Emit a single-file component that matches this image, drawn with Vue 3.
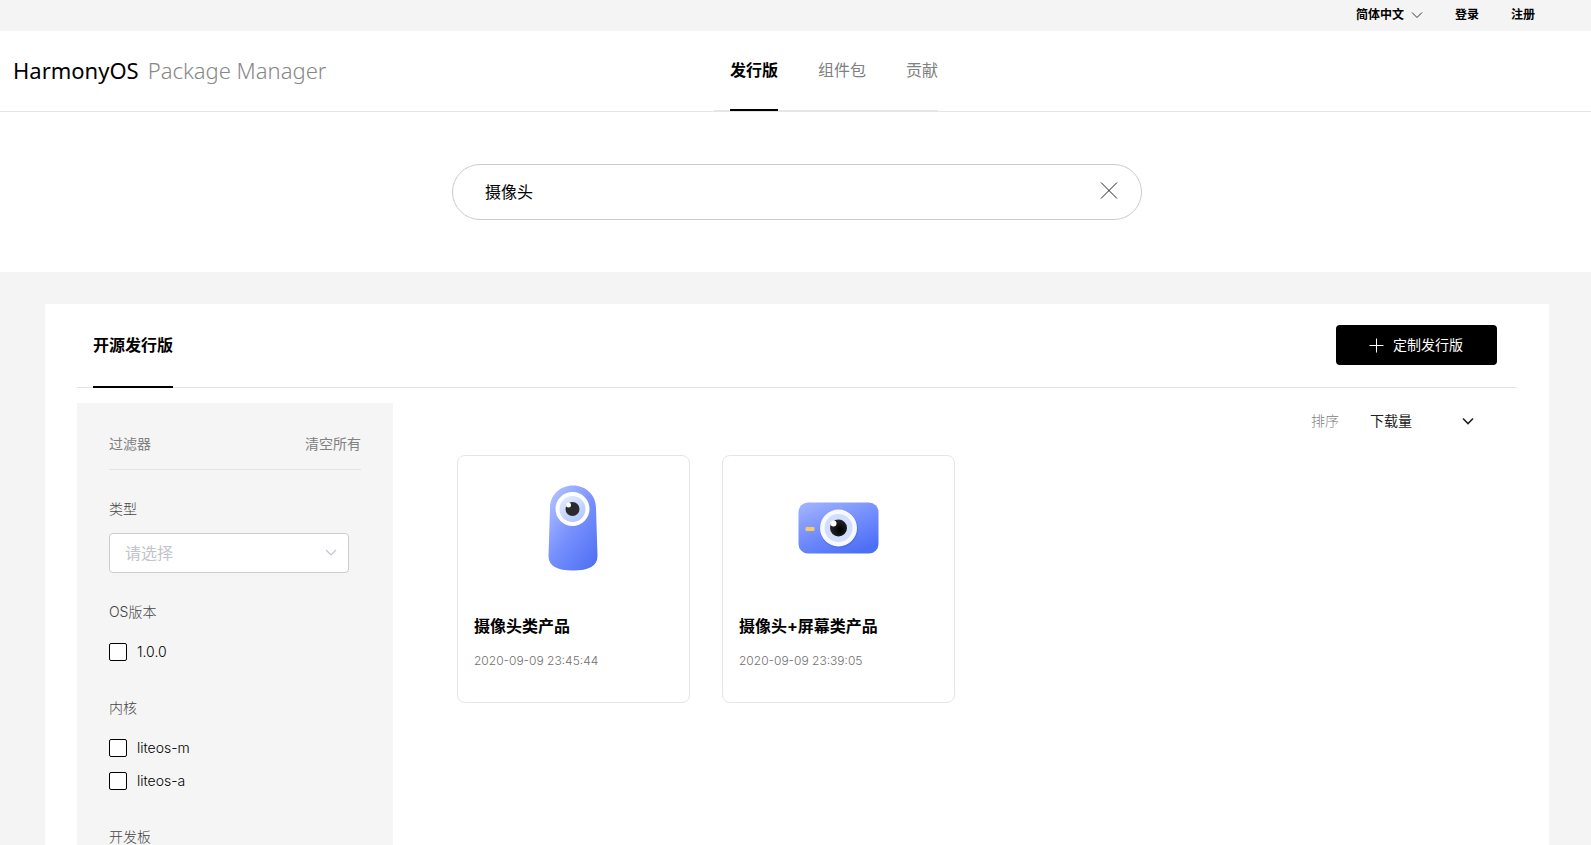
<script setup>
import { ref } from 'vue'

const keyword = ref('摄像头')
const type = ref('')
const sort = ref('downloads')
const checked = ref([])

const navItems = [
  { label: '发行版', active: true },
  { label: '组件包', active: false },
  { label: '贡献', active: false },
]

const groups = [
  { title: 'OS版本', options: ['1.0.0'] },
  { title: '内核', options: ['liteos-m', 'liteos-a'] },
  { title: '开发板', options: [] },
]

const products = [
  { icon: 'camera', name: '摄像头类产品', time: '2020-09-09 23:45:44' },
  { icon: 'screen', name: '摄像头+屏幕类产品', time: '2020-09-09 23:39:05' },
]

function clearFilters() {
  type.value = ''
  checked.value = []
}
</script>

<template>
  <div class="page">
    <div class="topbar">
      <button type="button" class="lang">
        简体中文
        <svg width="12" height="8" viewBox="0 0 12 8" aria-hidden="true">
          <path d="M1 1.5 6 6.5 11 1.5" fill="none" stroke="#333" stroke-width="1" />
        </svg>
      </button>
      <a href="#">登录</a>
      <a href="#">注册</a>
    </div>

    <header class="header">
      <a href="#" class="logo"><span class="brand">HarmonyOS</span><span class="product">Package Manager</span></a>
      <nav class="nav">
        <a v-for="n in navItems" :key="n.label" href="#" :class="{ active: n.active }">{{ n.label }}</a>
      </nav>
    </header>

    <section class="search">
      <form class="search-box" @submit.prevent>
        <input v-model="keyword" type="text" aria-label="搜索" />
        <button type="button" aria-label="清除" @click="keyword = ''">
          <svg width="18" height="18" viewBox="0 0 18 18" aria-hidden="true">
            <path d="M1 0.5 17 16.500M17 0.5 1 16.500" fill="none" stroke="#222" stroke-width="1" />
          </svg>
        </button>
      </form>
    </section>

    <main class="content">
      <div class="panel">
        <div class="tabs">
          <a href="#" class="tab">开源发行版</a>
          <button type="button" class="create">
            <svg width="15" height="15" viewBox="0 0 15 15" aria-hidden="true">
              <path d="M7.5 0.5V14.5M0.5 7.5H14.5" fill="none" stroke="#fff" stroke-width="1" />
            </svg>
            定制发行版
          </button>
        </div>

        <div class="body">
          <aside class="filter">
            <div class="filter-head">
              <span>过滤器</span>
              <button type="button" @click="clearFilters">清空所有</button>
            </div>
            <label class="group-title" for="type">类型</label>
            <div class="select">
              <select id="type" v-model="type">
                <option value="">请选择</option>
              </select>
              <svg width="12" height="8" viewBox="0 0 12 8" aria-hidden="true">
                <path d="M1 1 6 6 11 1" fill="none" stroke="#c0c4cc" stroke-width="1.2" />
              </svg>
            </div>
            <div v-for="g in groups" :key="g.title" class="group" role="group" :aria-label="g.title">
              <div class="group-title">{{ g.title }}</div>
              <label v-for="o in g.options" :key="o" class="option">
                <input v-model="checked" type="checkbox" :value="o" />
                <span>{{ o }}</span>
              </label>
            </div>
          </aside>

          <div class="results">
            <div class="sort">
              <label for="sort">排序</label>
              <div class="sort-select">
                <select id="sort" v-model="sort">
                  <option value="downloads">下载量</option>
                </select>
                <svg width="12" height="8" viewBox="0 0 12 8" aria-hidden="true">
                  <path d="M1 1.5 6 6.5 11 1.5" fill="none" stroke="#222" stroke-width="1.6" />
                </svg>
              </div>
            </div>

            <div class="cards">
              <article v-for="p in products" :key="p.name" class="card">
                <svg v-if="p.icon === 'camera'" class="art" viewBox="0 0 100 100" aria-hidden="true">
                  <defs>
                    <linearGradient id="camBody" x1="0.1" y1="0" x2="0.9" y2="1">
                      <stop offset="0" stop-color="#b4c4ff" />
                      <stop offset="0.5" stop-color="#7790fd" />
                      <stop offset="1" stop-color="#4f70f3" />
                    </linearGradient>
                    <linearGradient id="camIris" x1="0.2" y1="0" x2="0.8" y2="1">
                      <stop offset="0" stop-color="#e2eaff" />
                      <stop offset="1" stop-color="#b0c5ff" />
                    </linearGradient>
                  </defs>
                  <path d="M26 30C26 17 36 7.500 49 7.500S72 17 72 30L73.500 78C73.500 88 65 92.500 49 92.500S24.500 88 24.500 78Z" fill="url(#camBody)" />
                  <circle cx="48.500" cy="31" r="17" fill="#fff" />
                  <circle cx="48.500" cy="31" r="13" fill="url(#camIris)" />
                  <circle cx="48.500" cy="31" r="7" fill="#292a2d" />
                  <circle cx="44.500" cy="27" r="2.500" fill="#fff" />
                </svg>
                <svg v-else class="art" viewBox="0 0 100 100" aria-hidden="true">
                  <defs>
                    <linearGradient id="scrBody" x1="0.1" y1="0" x2="0.7" y2="1">
                      <stop offset="0" stop-color="#a0b2ff" />
                      <stop offset="0.5" stop-color="#748efd" />
                      <stop offset="1" stop-color="#4d6ff5" />
                    </linearGradient>
                    <radialGradient id="scrPupil" cx="0.6" cy="0.6" r="0.6">
                      <stop offset="0" stop-color="#000" />
                      <stop offset="1" stop-color="#25282c" />
                    </radialGradient>
                  </defs>
                  <rect x="9.500" y="24.500" width="80" height="51" rx="9.500" fill="url(#scrBody)" />
                  <rect x="16.500" y="49" width="9" height="4" rx="1" fill="#f9ca56" />
                  <circle cx="50" cy="51" r="19" fill="#3559d8" opacity="0.35" />
                  <circle cx="49.500" cy="50" r="18.500" fill="#f8f9fd" />
                  <circle cx="49.500" cy="50" r="14" fill="#d3ddfd" />
                  <circle cx="49.500" cy="50" r="8.500" fill="url(#scrPupil)" />
                  <circle cx="44.500" cy="45.500" r="3" fill="#fff" />
                </svg>
                <h3>{{ p.name }}</h3>
                <time>{{ p.time }}</time>
              </article>
            </div>
          </div>
        </div>
      </div>
    </main>
  </div>
</template>

<style>
html {
  scrollbar-width: none;
}
body {
  margin: 0;
}
</style>

<style scoped>
.page {
  display: flex;
  flex-direction: column;
  min-height: 100vh;
  background: #fff;
  color: #000;
  font-family: Inter, "Noto Sans CJK SC", sans-serif;
  font-size: 14px;
  line-height: 20px;
}
.page *,
.page *::before {
  box-sizing: border-box;
}
a {
  color: inherit;
  text-decoration: none;
}
button,
input,
select {
  margin: 0;
  padding: 0;
  border: 0;
  background: none;
  color: inherit;
  font: inherit;
  outline: none;
}
button,
select {
  cursor: pointer;
}
select {
  appearance: none;
}

.topbar {
  display: flex;
  justify-content: flex-end;
  align-items: center;
  gap: 32px;
  height: 31px;
  padding: 0 56px 2px 0;
  background: #f4f4f4;
  font-size: 12px;
  font-weight: 600;
}
.lang {
  display: flex;
  align-items: center;
  gap: 7px;
}

.header {
  display: grid;
  grid-template-columns: 714px 1fr;
  height: 81px;
  border-bottom: 1px solid #e5e5e5;
}
.logo {
  display: flex;
  align-items: center;
  gap: 9px;
  height: 80px;
  padding: 0 0 2px 13px;
  font-family: "Noto Sans", sans-serif;
  font-size: 22px;
}
.product {
  color: #888;
  font-weight: 300;
}
.nav {
  display: flex;
  justify-self: start;
  gap: 40px;
  height: 80px;
  padding-left: 16px;
  border-bottom: 1px solid #e4e7ed;
  color: #808080;
  font-size: 16px;
  line-height: 78px;
}
.nav a {
  height: 80px;
}
.nav .active {
  border-bottom: 2px solid #000;
  color: #000;
  font-weight: 700;
}

.search {
  padding: 52px 0 52px 3px;
}
.search-box {
  display: flex;
  align-items: center;
  max-width: 690px;
  height: 56px;
  margin: 0 auto;
  padding: 0 23px 2px 32px;
  border: 1px solid #ccc;
  border-radius: 28px;
}
.search-box input {
  flex: 1;
  min-width: 0;
  height: 24px;
  font-size: 16px;
}
.search-box button {
  display: flex;
}

.content {
  display: flex;
  flex: 1;
  padding: 32px 42px 0 45px;
  background: #f4f4f4;
}
.panel {
  display: flex;
  flex: 1;
  flex-direction: column;
  padding: 0 32px;
  background: #fff;
}
.tabs {
  display: flex;
  justify-content: space-between;
  align-items: flex-start;
  height: 84px;
  padding: 0 20px 0 16px;
  border-bottom: 1px solid #e4e4e4;
}
.tab {
  height: 84px;
  border-bottom: 2px solid #000;
  font-size: 16px;
  font-weight: 700;
  line-height: 82px;
}
.create {
  display: flex;
  align-items: center;
  gap: 9px;
  height: 40px;
  margin-top: 21px;
  padding: 0 34px 0 33px;
  border-radius: 4px;
  background: #000;
  color: #fff;
}
.body {
  display: flex;
  flex: 1;
  padding-top: 15px;
}

.filter {
  width: 316px;
  padding: 31px 32px 0;
  background: #f5f5f5;
}
.filter-head {
  display: flex;
  justify-content: space-between;
  height: 36px;
  margin-bottom: 29px;
  border-bottom: 1px solid #e4e4e4;
  color: #808080;
}
.filter-head button {
  height: 20px;
}
.group-title {
  display: block;
  color: #444;
  font-weight: 300;
}
.select {
  position: relative;
  width: 240px;
  margin: 14px 0 29px;
}
.select select {
  display: block;
  width: 100%;
  height: 40px;
  padding: 0 40px 0 15px;
  border: 1px solid #ccc;
  border-radius: 4px;
  background: #fff;
  color: #c0c4cc;
  font-size: 16px;
}
.select svg {
  position: absolute;
  top: 16px;
  right: 12px;
  pointer-events: none;
}
.group + .group {
  margin-top: 37px;
}
.group .option:nth-child(2) {
  margin-top: 21px;
}
.option {
  display: flex;
  align-items: center;
  gap: 10px;
  height: 18px;
  font-weight: 300;
}
.option + .option {
  margin-top: 15px;
}
.option input {
  width: 18px;
  height: 18px;
  border: 1px solid #000;
  border-radius: 2px;
  background: #fff;
  appearance: none;
}
.option input:checked {
  background: #000;
}

.results {
  flex: 1;
  padding: 8px 43px 0 64px;
}
.sort {
  display: flex;
  justify-content: flex-end;
  gap: 31px;
  color: #808080;
}
.sort label {
  font-weight: 300;
}
.sort-select {
  position: relative;
  width: 104px;
  color: #222;
}
.sort-select select {
  display: block;
  width: 100%;
  height: 20px;
}
.sort-select svg {
  position: absolute;
  top: 6px;
  right: 0;
  pointer-events: none;
}
.cards {
  display: flex;
  flex-wrap: wrap;
  gap: 32px;
  margin-top: 24px;
}
.card {
  display: flex;
  flex-direction: column;
  width: 233px;
  height: 248px;
  padding: 22px 16px;
  border: 1px solid #e5e5e5;
  border-radius: 8px;
}
.art {
  width: 100px;
  height: 100px;
  align-self: center;
}
.card h3 {
  margin: 36px 0 13px;
  font-size: 16px;
  font-weight: 700;
  line-height: 24px;
}
.card time {
  color: #707070;
  font-size: 12px;
  font-weight: 300;
}
</style>
